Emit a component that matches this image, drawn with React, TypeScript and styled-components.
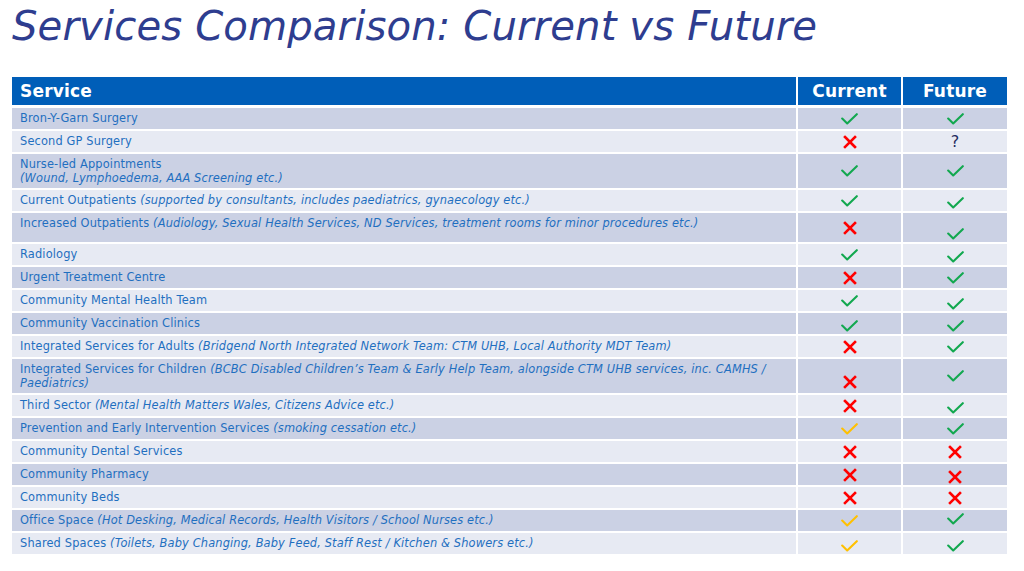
import React from "react";
import styled, { createGlobalStyle } from "styled-components";

type Mark = "yes" | "no" | "partial" | "unknown";

type Row = {
  name: string;
  note?: string;
  noteBreak?: boolean;
  wrapAt?: string;
  current: Mark;
  future: Mark;
  tall?: boolean;
  currentDrop?: number;
  futureDrop?: number;
};

const rows: Row[] = [
  { name: "Bron-Y-Garn Surgery", current: "yes", future: "yes" },
  { name: "Second GP Surgery", current: "no", future: "unknown" },
  {
    name: "Nurse-led Appointments",
    note: "(Wound, Lymphoedema, AAA Screening etc.)",
    noteBreak: true,
    current: "yes",
    future: "yes",
  },
  {
    name: "Current Outpatients",
    note: "(supported by consultants, includes paediatrics, gynaecology etc.)",
    current: "yes",
    future: "yes",
    futureDrop: 2,
  },
  {
    name: "Increased Outpatients",
    note: "(Audiology, Sexual Health Services, ND Services, treatment rooms for minor procedures etc.)",
    current: "no",
    future: "yes",
    tall: true,
    futureDrop: 6,
  },
  { name: "Radiology", current: "yes", future: "yes", futureDrop: 2 },
  { name: "Urgent Treatment Centre", current: "no", future: "yes" },
  { name: "Community Mental Health Team", current: "yes", future: "yes", futureDrop: 3 },
  { name: "Community Vaccination Clinics", current: "yes", future: "yes", currentDrop: 2, futureDrop: 2 },
  {
    name: "Integrated Services for Adults",
    note: "(Bridgend North Integrated Network Team: CTM UHB, Local Authority MDT Team)",
    current: "no",
    future: "yes",
  },
  {
    name: "Integrated Services for Children",
    note: "(BCBC Disabled Children’s Team & Early Help Team, alongside CTM UHB services, inc. CAMHS /",
    wrapAt: "Paediatrics)",
    current: "no",
    future: "yes",
    currentDrop: 6,
  },
  {
    name: "Third Sector",
    note: "(Mental Health Matters Wales, Citizens Advice etc.)",
    current: "no",
    future: "yes",
    futureDrop: 2,
  },
  {
    name: "Prevention and Early Intervention Services",
    note: "(smoking cessation etc.)",
    current: "partial",
    future: "yes",
  },
  { name: "Community Dental Services", current: "no", future: "no" },
  { name: "Community Pharmacy", current: "no", future: "no", futureDrop: 2 },
  { name: "Community Beds", current: "no", future: "no" },
  {
    name: "Office Space",
    note: "(Hot Desking, Medical Records, Health Visitors / School Nurses etc.)",
    current: "partial",
    future: "yes",
    futureDrop: -2,
  },
  {
    name: "Shared Spaces",
    note: "(Toilets, Baby Changing, Baby Feed, Staff Rest / Kitchen & Showers etc.)",
    current: "partial",
    future: "yes",
    currentDrop: 2,
    futureDrop: 2,
  },
];

const GlobalStyle = createGlobalStyle`
  html, body {
    margin: 0;
    padding: 0;
    background: #ffffff;
  }
  body {
    font-family: "DejaVu Sans", Verdana, sans-serif;
  }
`;

const Page = styled.div`
  width: 1024px;
  height: 571px;
  padding: 0 12px;
  box-sizing: border-box;
  overflow: hidden;
`;

const Title = styled.h1`
  margin: 0;
  padding-top: 2px;
  height: 70px;
  font-family: "DejaVu Sans", Verdana, sans-serif;
  font-style: italic;
  font-weight: normal;
  font-size: 40.2px;
  line-height: 48px;
  color: #2e3d8f;
  letter-spacing: 0.1px;
`;

const Table = styled.div`
  width: 995px;
  margin-top: 5px;
  display: grid;
  grid-template-columns: 784px 103px 104px;
  column-gap: 2px;
  row-gap: 2px;
`;

const HeadCell = styled.div<{ $center?: boolean }>`
  background: #005eb8;
  color: #ffffff;
  height: 28px;
  display: flex;
  align-items: center;
  justify-content: ${(p) => (p.$center ? "center" : "flex-start")};
  padding: 0 8px;
  margin-bottom: 1px;
  font-weight: bold;
  font-size: 17px;
  letter-spacing: 0.2px;
`;

const Cell = styled.div<{ $shade: boolean; $tall?: boolean }>`
  background: ${(p) => (p.$shade ? "#cbd1e4" : "#e7eaf3")};
  min-height: ${(p) => (p.$tall ? "29px" : "21px")};
  box-sizing: border-box;
`;

const ServiceCell = styled(Cell)`
  padding: 3px 8px 3px 8px;
  font-size: 11.4px;
  line-height: 14px;
  color: #1f6fc0;
  letter-spacing: 0.15px;
`;

const Note = styled.i`
  font-style: italic;
`;

const MarkCell = styled(Cell)<{ $drop?: number }>`
  display: flex;
  align-items: center;
  justify-content: center;
  padding-top: ${(p) => Math.max(0, (p.$drop ?? 0) * 2)}px;
  padding-bottom: ${(p) => Math.max(0, -(p.$drop ?? 0) * 2)}px;
`;

const Question = styled.span`
  font-family: "DejaVu Sans", Verdana, sans-serif;
  font-size: 16px;
  line-height: 16px;
  color: #1f2d5e;
`;

const Tick = ({ color }: { color: string }) => (
  <svg width="17" height="12" viewBox="0 0 17 12">
    <path d="M1.2 5.6 L6.2 10.4 L15.8 1.2" fill="none" stroke={color} strokeWidth="2.1" strokeLinecap="round" strokeLinejoin="round" />
  </svg>
);

const Cross = () => (
  <svg width="14" height="14" viewBox="0 0 14 14">
    <path d="M2 2 L12 12 M12 2 L2 12" fill="none" stroke="#ff0000" strokeWidth="2.6" strokeLinecap="square" />
  </svg>
);

const MarkIcon = ({ mark }: { mark: Mark }) => {
  if (mark === "yes") return <Tick color="#12a84f" />;
  if (mark === "partial") return <Tick color="#ffc000" />;
  if (mark === "no") return <Cross />;
  return <Question>?</Question>;
};

const App = () => {
  return (
    <Page>
      <GlobalStyle />
      <Title>Services Comparison: Current vs Future</Title>
      <Table>
        <HeadCell>Service</HeadCell>
        <HeadCell $center>Current</HeadCell>
        <HeadCell $center>Future</HeadCell>

        {rows.map((row, index) => {
          const shade = index % 2 === 0;
          return (
            <React.Fragment key={index}>
              <ServiceCell $shade={shade} $tall={row.tall}>
                {row.name}
                {row.note && (
                  <>
                    {row.noteBreak ? <br /> : " "}
                    <Note>{row.note}</Note>
                  </>
                )}
                {row.wrapAt && (
                  <>
                    <br />
                    <Note>{row.wrapAt}</Note>
                  </>
                )}
              </ServiceCell>
              <MarkCell $shade={shade} $tall={row.tall} $drop={row.currentDrop}>
                <MarkIcon mark={row.current} />
              </MarkCell>
              <MarkCell $shade={shade} $tall={row.tall} $drop={row.futureDrop}>
                <MarkIcon mark={row.future} />
              </MarkCell>
            </React.Fragment>
          );
        })}
      </Table>
    </Page>
  );
};

export default App;
